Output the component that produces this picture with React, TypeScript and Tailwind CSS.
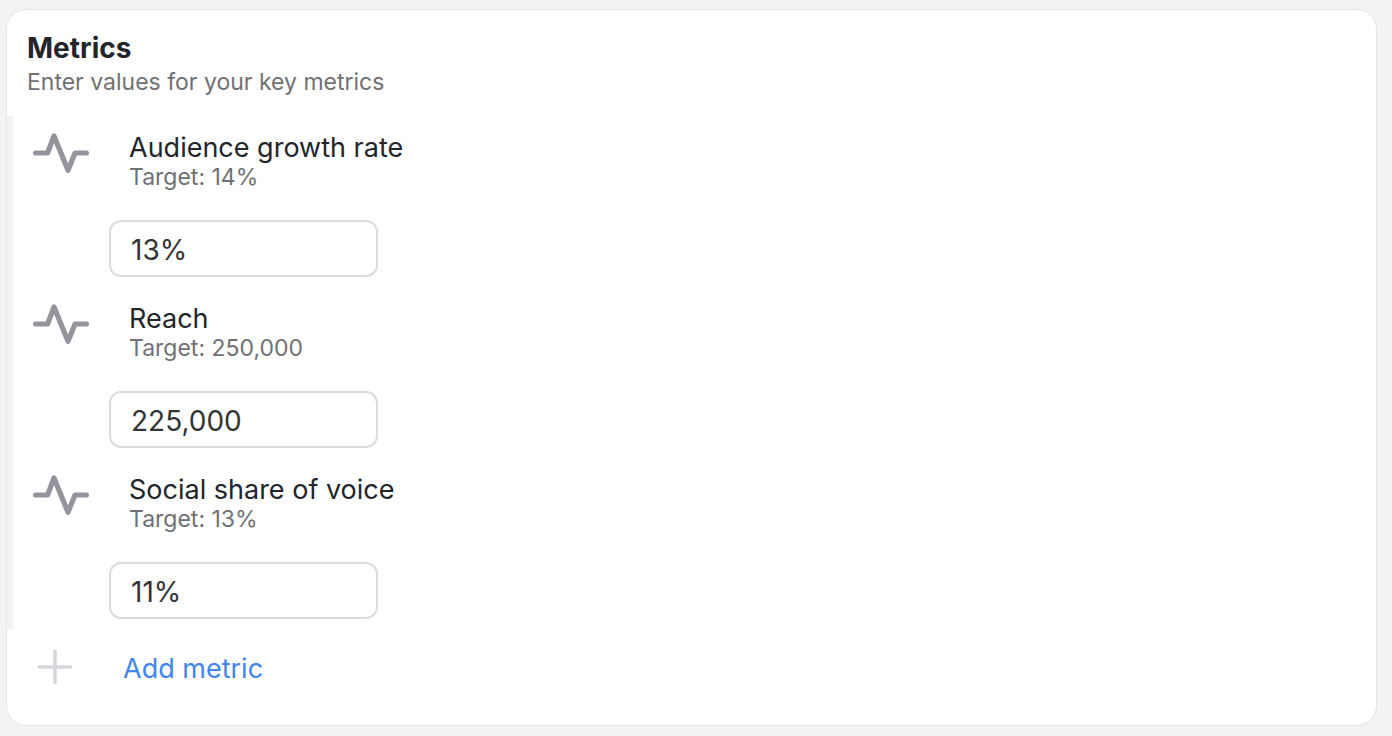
import { useState } from 'react';

type Metric = {
  id: string;
  name: string;
  target: string;
  value: string;
};

const initialMetrics: Metric[] = [
  { id: 'growth', name: 'Audience growth rate', target: '14%', value: '13%' },
  { id: 'reach', name: 'Reach', target: '250,000', value: '225,000' },
  { id: 'voice', name: 'Social share of voice', target: '13%', value: '11%' },
];

function PulseIcon() {
  return (
    <svg
      className="h-[42px] w-14 shrink-0 text-[#95949d]"
      viewBox="0 0 56 42"
      fill="none"
      stroke="currentColor"
      strokeWidth="5.2"
      strokeLinecap="round"
      strokeLinejoin="round"
      aria-hidden="true"
    >
      <path d="M2.6 21H14.6L21 3.9L35 38.3L42 21H53.4" />
    </svg>
  );
}

function PlusIcon() {
  return (
    <svg
      className="h-9 w-9 shrink-0 text-[#d5d7dd]"
      viewBox="0 0 36 36"
      fill="none"
      stroke="currentColor"
      strokeWidth="3.6"
      strokeLinecap="round"
      aria-hidden="true"
    >
      <path d="M18 2.4V33.6M2.4 18H33.6" />
    </svg>
  );
}

function MetricRow({ metric, onChange }: { metric: Metric; onChange: (value: string) => void }) {
  return (
    <li className="flex items-start border-l-6 border-[#f2f3f5] pt-4 pb-2.5 pl-5">
      <PulseIcon />
      <div className="ml-5">
        <label htmlFor={metric.id} className="block pl-5">
          <span className="block text-[27px] leading-8 text-[#22252a]">{metric.name}</span>
          <span className="block text-[23px] leading-[26px] text-[#707174]">Target: {metric.target}</span>
        </label>
        <input
          id={metric.id}
          type="text"
          value={metric.value}
          onChange={(e) => onChange(e.target.value)}
          className="mt-[30px] block h-[57px] w-[269px] rounded-xl border-2 border-[#dcdcdd] bg-white px-5 pt-0.5 text-[28px] text-[#333436]"
        />
      </div>
    </li>
  );
}

export default function App() {
  const [metrics, setMetrics] = useState(initialMetrics);

  const updateValue = (id: string, value: string) =>
    setMetrics(metrics.map((m) => (m.id === id ? { ...m, value } : m)));

  const addMetric = () =>
    setMetrics([...metrics, { id: `metric-${metrics.length}`, name: 'New metric', target: '0', value: '' }]);

  return (
    <main className="min-h-screen bg-[#f2f3f5] pt-[9px] pr-[15px] pb-2.5 pl-1.5 font-['Inter',sans-serif]">
      <section className="rounded-[20px] border border-[#e4e5ea] bg-white">
        <header className="px-5 pt-5 pb-[18px]">
          <h2 className="text-[28px] leading-9 font-bold text-[#22252a]">Metrics</h2>
          <p className="text-[23px] leading-8 text-[#707174]">Enter values for your key metrics</p>
        </header>
        <ul>
          {metrics.map((metric) => (
            <MetricRow key={metric.id} metric={metric} onChange={(value) => updateValue(metric.id, value)} />
          ))}
        </ul>
        <div className="pt-5 pb-9 pl-[30px]">
          <button type="button" onClick={addMetric} className="flex items-start gap-[50px]">
            <PlusIcon />
            <span className="text-[27px] leading-10 text-[#4285ec]">Add metric</span>
          </button>
        </div>
      </section>
    </main>
  );
}
